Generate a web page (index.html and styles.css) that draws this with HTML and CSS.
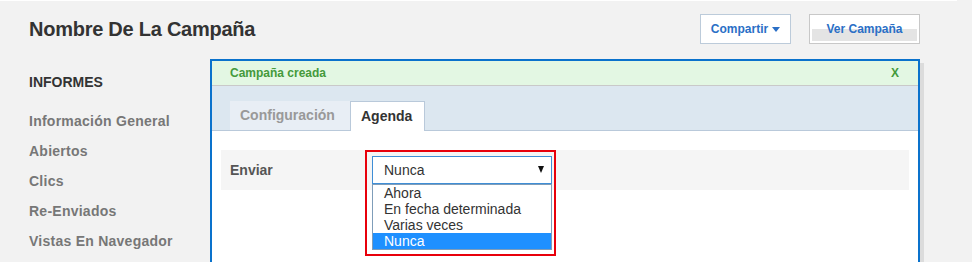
FILE: index.html
```html
<!DOCTYPE html>
<html lang="es">
<head>
<meta charset="utf-8">
<title>Nombre De La Campaña</title>
<link rel="stylesheet" href="styles.css">
</head>
<body>
<div class="topline"></div>
<div class="page">
  <header class="header">
    <h1 class="title">Nombre De La Campaña</h1>
    <div class="actions">
      <button class="btn btn-share">Compartir<span class="caret"></span></button>
      <button class="btn btn-view"><span class="btn-view-bg"></span><span class="btn-label">Ver Campaña</span></button>
    </div>
  </header>
  <div class="main">
    <nav class="sidebar">
      <h2 class="side-title">INFORMES</h2>
      <ul class="side-list">
        <li>Información General</li>
        <li>Abiertos</li>
        <li>Clics</li>
        <li>Re-Enviados</li>
        <li>Vistas En Navegador</li>
      </ul>
    </nav>
    <section class="panel">
      <div class="alert">
        <span>Campaña creada</span>
        <span class="alert-close">X</span>
      </div>
      <div class="tabs">
        <div class="tab">Configuración</div>
        <div class="tab tab-active">Agenda</div>
      </div>
      <div class="content">
        <div class="row">
          <div class="row-label">Enviar</div>
          <div class="select-wrap">
            <div class="highlight"></div>
            <div class="select">
              <span>Nunca</span>
              <span class="select-arrow"></span>
            </div>
            <ul class="options">
              <li>Ahora</li>
              <li>En fecha determinada</li>
              <li>Varias veces</li>
              <li class="selected">Nunca</li>
            </ul>
          </div>
        </div>
      </div>
    </section>
  </div>
</div>
</body>
</html>
```
FILE: styles.css
```css
* { box-sizing: border-box; }
html, body { margin: 0; padding: 0; }
body {
  background: #f2f2f2;
  font-family: "Liberation Sans", Arial, sans-serif;
  color: #333;
  height: 262px;
  overflow: hidden;
}
.topline { height: 1px; width: 957px; background: #fff; }
.page { padding: 0 52px 0 29px; }

.header {
  display: flex;
  justify-content: space-between;
  align-items: center;
  margin-top: 13px;
  height: 30px;
}
.title {
  margin: 0;
  font-size: 20px;
  font-weight: bold;
  color: #333;
  letter-spacing: -0.25px;
}
.actions { display: flex; gap: 18px; }
.btn {
  height: 30px;
  background: #fff;
  font-family: "Liberation Sans", Arial, sans-serif;
  font-size: 12px;
  font-weight: bold;
  color: #2a6fc6;
  padding: 0;
  margin: 0;
  display: flex;
  align-items: center;
  justify-content: center;
}
.btn-share {
  width: 91px;
  border: 1px solid #bccbda;
}
.caret {
  display: inline-block;
  margin-left: 4px;
  width: 0; height: 0;
  border-left: 4px solid transparent;
  border-right: 4px solid transparent;
  border-top: 5px solid #2a6fc6;
}
.btn-view {
  width: 111px;
  border: 1px solid #c8c8c8;
  position: relative;
}
.btn-view-bg {
  position: absolute;
  left: 2px; right: 2px;
  top: 14px; height: 12px;
  background: #e4e4e4;
}
.btn-label { position: relative; }

.main { display: flex; margin-top: 15px; }
.sidebar { width: 181px; flex: none; }
.side-title {
  margin: 13px 0 0;
  font-size: 14px;
  line-height: 20px;
  font-weight: bold;
  color: #333;
}
.side-list {
  list-style: none;
  margin: 19px 0 0;
  padding: 0;
}
.side-list li {
  font-size: 14px;
  line-height: 20px;
  font-weight: bold;
  color: #777;
  letter-spacing: 0.25px;
  margin-bottom: 10px;
}

.panel {
  width: 710px;
  height: 203px;
  border: 2px solid #0a72cc;
  border-bottom: none;
  box-shadow: 4px 4px 0 #dcdcdc;
  background: #fff;
}
.alert {
  height: 25px;
  background: #e3f7e3;
  border-bottom: 1px solid #c9c9c9;
  display: flex;
  justify-content: space-between;
  align-items: center;
  padding: 0 19px 0 18px;
  font-size: 12px;
  font-weight: bold;
  color: #449a3c;
}
.tabs {
  height: 45px;
  background: #dce7f0;
  border-bottom: 1px solid #b9c9da;
  display: flex;
  align-items: flex-end;
  padding-left: 18px;
}
.tab {
  height: 29px;
  padding: 0 10px;
  width: 120px;
  background: #e8eef5;
  color: #999;
  font-size: 14px;
  font-weight: bold;
  line-height: 29px;
}
.tab-active {
  width: 75px;
  height: 30px;
  background: #fff;
  color: #333;
  border: 1px solid #b9c9da;
  border-bottom: none;
  margin-bottom: -1px;
  line-height: 28px;
}

.content { padding: 19px 9px 0; }
.row {
  height: 40px;
  background: #f5f5f5;
  display: flex;
  align-items: center;
  padding-left: 9px;
}
.row-label {
  width: 142px;
  font-size: 14px;
  font-weight: bold;
  color: #555;
}
.select-wrap { position: relative; width: 180px; }
.highlight {
  position: absolute;
  left: -7px; top: -6px;
  width: 191px; height: 106px;
  border: 2px solid #e8000b;
}
.select {
  height: 28px;
  border: 1px solid #3f8ed6;
  background: #fff;
  display: flex;
  align-items: center;
  justify-content: space-between;
  padding: 0 7px 0 11px;
  font-size: 14px;
  color: #333;
}
.select-arrow {
  width: 0; height: 0;
  border-left: 3.5px solid transparent;
  border-right: 3.5px solid transparent;
  border-top: 7px solid #111;
  margin-top: -2px;
}
.options {
  position: absolute;
  left: 0; top: 28px;
  width: 180px;
  margin: 0; padding: 0;
  list-style: none;
  border: 1px solid #7f9db9;
  background: #fff;
}
.options li {
  height: 16px;
  line-height: 16px;
  font-size: 14px;
  padding-left: 11px;
  color: #333;
}
.options li.selected { background: #1e90ff; color: #fff; }
```
